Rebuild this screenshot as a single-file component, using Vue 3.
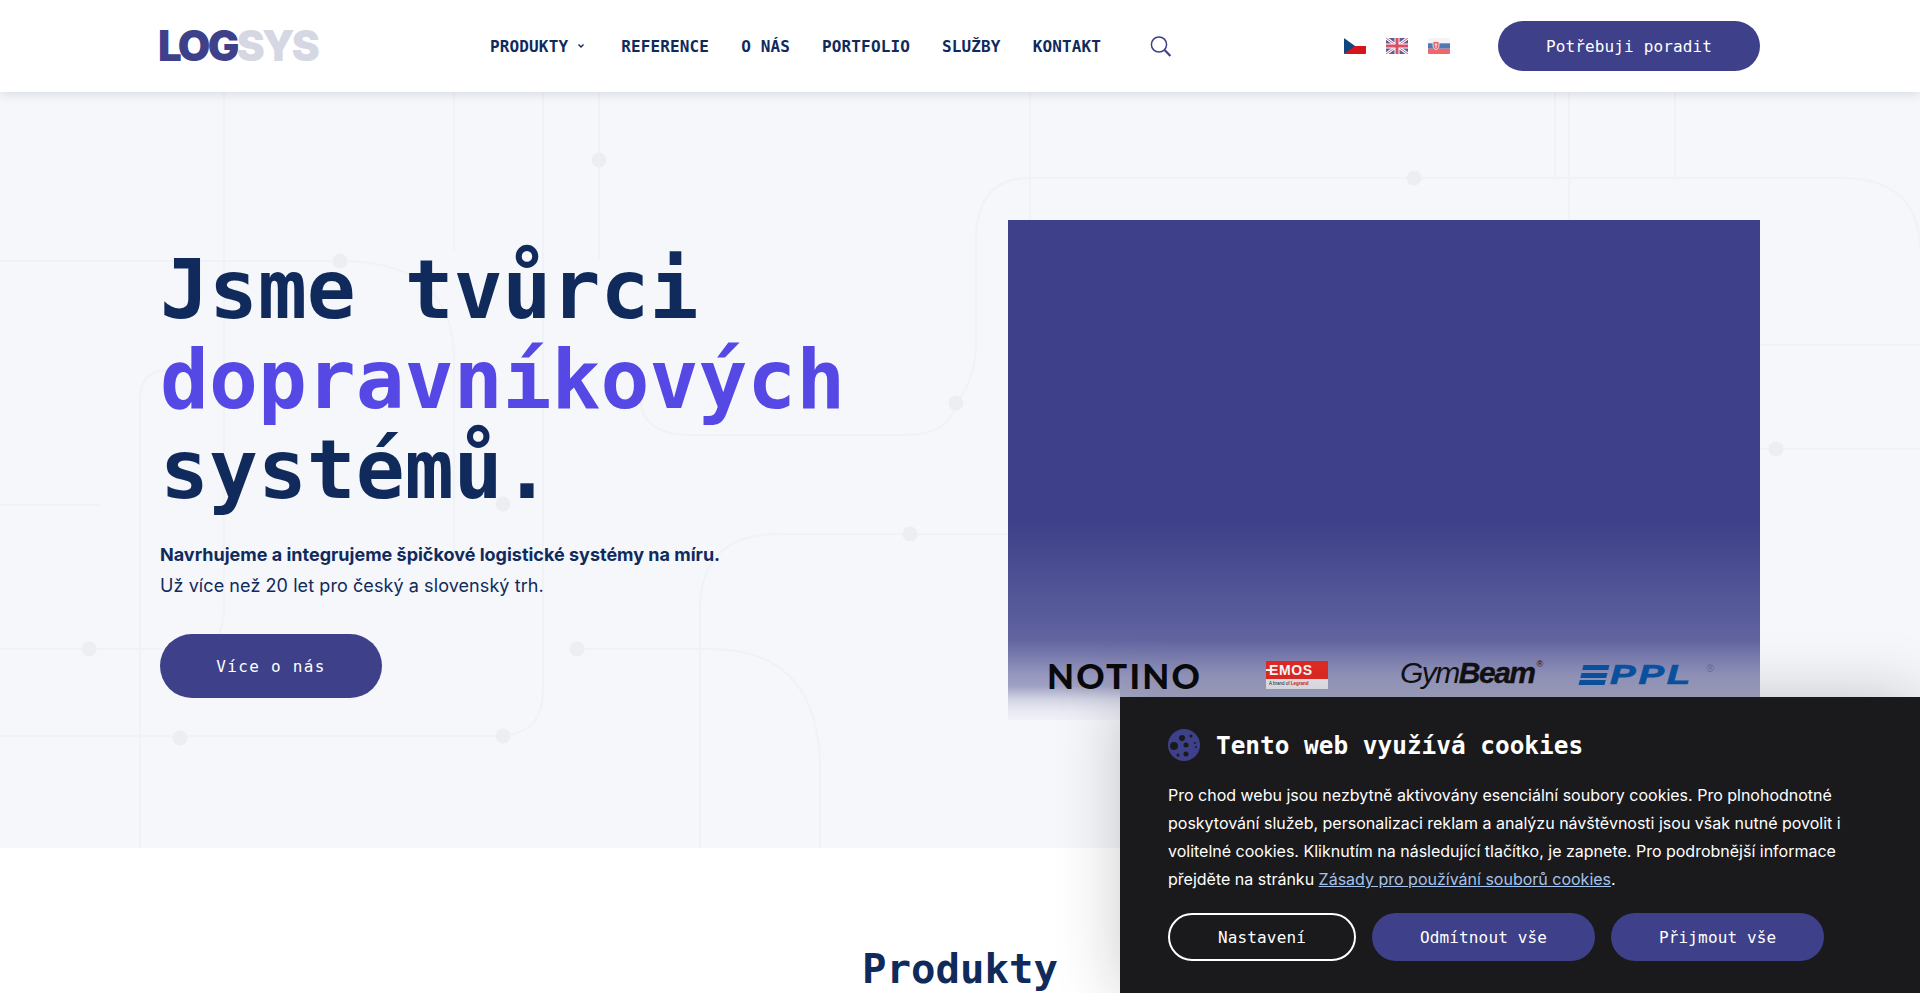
<script setup>
const navItems = ['REFERENCE', 'O NÁS', 'PORTFOLIO', 'SLUŽBY', 'KONTAKT']
const bgLines = [
  'M224 92V610Q224 649 185 649H0',
  'M454 92V250',
  'M543 92V690Q543 736 497 736H0',
  'M599 92V260',
  'M140 848V400Q140 370 170 370',
  'M0 261H340Q454 261 454 360V560',
  'M577 649H710Q820 649 820 770V848',
  'M700 848V610Q700 534 780 534H1008',
  'M640 370V395Q640 435 690 435H905Q950 435 956 403Q976 380 976 340V240Q976 178 1030 178H1840Q1920 178 1920 250',
  'M1030 92V220',
  'M1569 92V220',
  'M1555 92V178',
  'M1675 92V178',
  'M1760 345H1920',
  'M1760 449H1920',
  'M0 505H100',
]
const bgDots = [
  [599, 160], [340, 261], [956, 403], [503, 504], [910, 534], [89, 649],
  [577, 649], [180, 738], [503, 736], [1414, 178], [1776, 449],
]
const cookieDots = [
  [14, 9, 3], [23, 7, 1.5], [6, 17, 4], [18, 16, 2.5], [27, 14, 1], [10, 26, 1.5], [18, 25, 2.5], [28, 18, 1],
]
</script>

<template>
  <div class="page">
    <header class="topbar">
      <div class="logo"><span class="logo-a">LOG</span><span class="logo-b">SYS</span></div>
      <nav class="menu">
        <a class="menu-item first">PRODUKTY
          <svg class="caret" width="10" height="6" viewBox="0 0 10 6"><path d="M2.5 1.5 5 4l2.5-2.5" fill="none" stroke="#102a5c" stroke-width="1.4"/></svg>
        </a>
        <a v-for="item in navItems" :key="item" class="menu-item">{{ item }}</a>
      </nav>
      <svg class="search" width="22" height="21" viewBox="0 0 22 21">
        <circle cx="9" cy="8.5" r="7.6" fill="none" stroke="#3e4089" stroke-width="1.5"/>
        <path d="M14.6 14 20.4 20" stroke="#3e4089" stroke-width="2.2" fill="none"/>
      </svg>
      <div class="flags">
        <svg width="22" height="16" viewBox="0 0 22 16">
          <rect width="22" height="8" fill="#fff"/><rect y="8" width="22" height="8" fill="#d7141a"/>
          <path d="M0 0 11 8 0 16Z" fill="#11457e"/>
        </svg>
        <svg width="22" height="16" viewBox="0 0 22 16">
          <rect width="22" height="16" fill="#5b5f97"/>
          <path d="M0 0 22 16M22 0 0 16" stroke="#fff" stroke-width="3"/>
          <path d="M0 0 22 16M22 0 0 16" stroke="#d9587a" stroke-width="1"/>
          <path d="M11 0V16M0 8H22" stroke="#fff" stroke-width="5"/>
          <path d="M11 0V16M0 8H22" stroke="#d94f68" stroke-width="3"/>
        </svg>
        <svg width="22" height="16" viewBox="0 0 22 16">
          <rect width="22" height="5.3" fill="#f4f4f6"/><rect y="5.3" width="22" height="5.4" fill="#4f78b8"/><rect y="10.7" width="22" height="5.3" fill="#f0666a"/>
          <path d="M5 3.500h6v4.500c0 2-1.500 3-3 3.700C6.500 11 5 10 5 8Z" fill="#e8666c" stroke="#f4f4f6" stroke-width="0.8"/>
          <path d="M8 5v5M6.700 6.800h2.600" stroke="#fff" stroke-width="0.8"/>
        </svg>
      </div>
      <a class="pill head-cta">Potřebuji poradit</a>
    </header>

    <section class="hero">
      <svg class="hero-bg" width="1920" height="756" viewBox="0 92 1920 756" fill="none">
        <path v-for="d in bgLines" :key="d" :d="d" stroke="#f0f2f5" stroke-width="2"/>
        <circle v-for="p in bgDots" :key="p[0] + '-' + p[1]" :cx="p[0]" :cy="p[1]" r="7.500" fill="#eceef1"/>
      </svg>
      <div class="hero-text">
        <h1>Jsme tvůrci<br><span class="accent">dopravníkových</span><br>systémů.</h1>
        <p class="lead"><strong>Navrhujeme a integrujeme špičkové logistické systémy na míru.</strong><br><span class="lead-2">Už více než 20 let pro český a slovenský trh.</span></p>
        <a class="pill hero-cta">Více o nás</a>
      </div>
      <div class="visual">
        <div class="brands">
          <span class="notino">NOTINO</span>
          <div class="emos">
            <div class="emos-top"><i></i>EMOS</div>
            <div class="emos-bottom">A brand of <b>Legrand</b></div>
          </div>
          <span class="gym">Gym<b>Beam</b><sup>®</sup></span>
          <div class="ppl">
            <span class="ppl-bars"><i></i><i></i><i></i></span>
            <span class="ppl-text">PPL</span>
            <sup>®</sup>
          </div>
        </div>
      </div>
    </section>

    <section class="products">
      <h2>Produkty</h2>
    </section>

    <aside class="cookies">
      <div class="cookie-head">
        <svg width="32" height="32" viewBox="0 0 32 32">
          <circle cx="16" cy="16" r="16" fill="#3e4089"/>
          <circle v-for="c in cookieDots" :key="c[0] + '-' + c[1]" :cx="c[0]" :cy="c[1]" :r="c[2]" fill="#1a1a1c"/>
        </svg>
        <h3>Tento web využívá cookies</h3>
      </div>
      <p class="cookie-text">Pro chod webu jsou nezbytně aktivovány esenciální soubory cookies. Pro plnohodnotné poskytování služeb, personalizaci reklam a analýzu návštěvnosti jsou však nutné povolit i volitelné cookies. Kliknutím na následující tlačítko, je zapnete. Pro podrobnější informace přejděte na stránku <a>Zásady pro používání souborů cookies</a>.</p>
      <div class="cookie-actions">
        <button class="cbtn ghost">Nastavení</button>
        <button class="cbtn">Odmítnout vše</button>
        <button class="cbtn">Přijmout vše</button>
      </div>
    </aside>
  </div>
</template>

<style>
html, body { margin: 0; overflow: hidden; background: #fff; }
</style>

<style scoped>
.page {
  width: 1920px;
  height: 993px;
  overflow: hidden;
  position: relative;
  font-family: "Inter", "Liberation Sans", sans-serif;
  color: #102a5c;
}
.topbar {
  position: relative;
  z-index: 2;
  height: 92px;
  box-sizing: border-box;
  padding: 0 160px;
  display: flex;
  align-items: center;
  background: #fff;
  box-shadow: 0 2px 10px rgba(40, 50, 80, 0.14);
}
.logo {
  width: 160px;
  margin-left: -2px;
  margin-right: 2px;
  font-size: 42px;
  font-weight: 900;
  letter-spacing: -2.700px;
  line-height: 1;
  white-space: nowrap;
}
.logo-a { color: #3e4089; }
.logo-b { color: #d5d8e2; }
.menu {
  margin-left: 170px;
  display: flex;
  gap: 32px;
  font-family: "DejaVu Sans Mono", "Liberation Mono", monospace;
  font-size: 16px;
  font-weight: 700;
  letter-spacing: 0.14px;
}
.menu-item { display: flex; align-items: center; gap: 8px; white-space: nowrap; }
.first { margin-right: 3px; }
.caret { display: block; }
.search { margin-left: 49px; flex: none; }
.flags { margin-left: 172px; display: flex; gap: 20px; }
.flags svg { display: block; border-radius: 1px; }
.pill {
  display: flex;
  align-items: center;
  justify-content: center;
  box-sizing: border-box;
  background: #3e4089;
  color: #fff;
  font-family: "DejaVu Sans Mono", "Liberation Mono", monospace;
  font-size: 16px;
  letter-spacing: 0.14px;
}
.head-cta { margin-left: auto; width: 262px; height: 50px; border-radius: 25px; }
.hero {
  position: relative;
  height: 756px;
  box-sizing: border-box;
  padding: 0 160px;
  display: flex;
  align-items: center;
  justify-content: space-between;
  background: #f5f7fa;
}
.hero-bg { position: absolute; left: 0; top: 0; }
.hero-text { position: relative; }
h1 {
  margin: 3px 0 0;
  font-family: "DejaVu Sans Mono", "Liberation Mono", monospace;
  font-size: 81.300px;
  line-height: 90px;
  font-weight: 700;
  letter-spacing: 0;
}
.accent { color: #5548e4; }
.lead { margin: 24px 0 33px; font-size: 18px; line-height: 31px; }
.lead strong { font-weight: 700; }
.lead-2 { letter-spacing: 0.08px; }
.hero-cta { width: 222px; height: 64px; border-radius: 32px; font-size: 16px; letter-spacing: 1.300px; }
.visual {
  position: relative;
  width: 752px;
  height: 500px;
  box-sizing: border-box;
  background: linear-gradient(180deg, #3e4089 0, #3e4089 302px, #5a5d9c 400px, #62659f 420px, #9597bf 455px, #a8aac6 477px, #cfd0e0 490px, #f0f1f6 500px);
}
.visual::after {
  content: "";
  position: absolute;
  left: 0;
  top: 466px;
  width: 112px;
  height: 34px;
  background: linear-gradient(180deg, rgba(240, 241, 246, 0), rgba(225, 226, 238, 0.7) 40%, rgba(240, 241, 246, 1));
}
.brands {
  position: absolute;
  z-index: 1;
  left: 0;
  top: 441px;
  width: 100%;
  height: 30px;
}
.notino {
  position: absolute;
  left: 39px;
  top: -4px;
  font-family: "Lato", "Inter", sans-serif;
  font-size: 35px;
  line-height: 36px;
  font-weight: 900;
  letter-spacing: 2.200px;
  color: #0a0a0c;
}
.emos {
  position: absolute;
  left: 258px;
  top: 0;
  width: 62px;
  height: 28px;
  font-family: "Liberation Sans", sans-serif;
}
.emos-top {
  height: 18px;
  background: #e32b24;
  color: #fff;
  font-size: 14px;
  line-height: 18px;
  font-weight: 700;
  letter-spacing: 0.6px;
  padding-left: 3px;
  display: flex;
  align-items: center;
  gap: 0;
  position: relative;
}
.emos-top i { position: absolute; left: 0; top: 8px; width: 4px; height: 2px; background: #fff; }
.emos-bottom {
  height: 10px;
  background: #e9e9ee;
  color: #222;
  font-size: 4.500px;
  line-height: 10px;
  padding-left: 3px;
  white-space: nowrap;
}
.emos-bottom b { color: #d2232a; }
.gym {
  position: absolute;
  left: 392px;
  top: -6px;
  font-family: "Liberation Sans", sans-serif;
  font-size: 30px;
  line-height: 36px;
  font-style: italic;
  letter-spacing: -1.500px;
  color: #111;
  white-space: nowrap;
}
.gym b { -webkit-text-stroke: 0.4px #111; }
.gym sup { font-size: 9px; font-style: normal; vertical-align: 16px; line-height: 0; margin-left: 2px; letter-spacing: 0; }
.ppl {
  position: absolute;
  left: 573px;
  top: 1px;
  display: flex;
  align-items: flex-start;
  color: #0a54a4;
  font-family: "Liberation Sans", sans-serif;
}
.ppl-bars {
  margin-top: 3px;
  width: 26px;
  height: 20px;
  display: flex;
  flex-direction: column;
  justify-content: space-between;
  transform: skewX(-14deg);
}
.ppl-bars i { display: block; height: 5px; background: #0a54a4; }
.ppl-text {
  margin-left: 3px;
  font-size: 27px;
  line-height: 26px;
  font-weight: 700;
  font-style: italic;
  letter-spacing: 2px;
  -webkit-text-stroke: 0.7px #0a54a4;
  transform: scaleX(1.42);
  transform-origin: left;
  width: 92px;
}
.ppl sup { font-size: 11px; color: #5f6ea8; line-height: 12px; margin-left: 4px; }
.products { background: #fff; height: 145px; text-align: center; }
h2 {
  margin: 0;
  padding-top: 96px;
  font-family: "DejaVu Sans Mono", "Liberation Mono", monospace;
  font-size: 40.700px;
  line-height: 50px;
  font-weight: 700;
}
.cookies {
  position: absolute;
  right: 0;
  bottom: 0;
  z-index: 3;
  width: 800px;
  height: 296px;
  box-sizing: border-box;
  padding: 32px 48px 0;
  background: #1a1a1c;
  color: #fff;
  box-shadow: 0 0 60px rgba(20, 20, 30, 0.22);
}
.cookie-head { display: flex; align-items: center; gap: 16px; height: 32px; }
.cookie-head svg { display: block; flex: none; }
h3 {
  margin: 0;
  padding-top: 2px;
  font-family: "DejaVu Sans Mono", "Liberation Mono", monospace;
  font-size: 24.400px;
  font-weight: 700;
  line-height: 32px;
}
.cookie-text { margin: 20px 0 20px; font-size: 16px; line-height: 28px; width: 690px; }
.cookie-text a { color: #a4c2eb; text-decoration: underline; }
.cookie-actions { display: flex; gap: 16px; }
.cbtn {
  height: 48px;
  padding: 0 48px;
  border: 0;
  border-radius: 24px;
  background: #3e4089;
  color: #fff;
  font-family: "DejaVu Sans Mono", "Liberation Mono", monospace;
  font-size: 16px;
  letter-spacing: 0.14px;
}
.ghost { background: transparent; border: 2px solid #fff; padding: 0 48px; }
</style>
